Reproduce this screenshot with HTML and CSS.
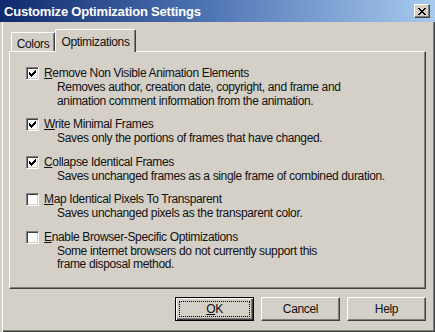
FILE: index.html
```html
<!DOCTYPE html>
<html>
<head>
<meta charset="utf-8">
<link rel="stylesheet" href="styles.css">
</head>
<body>
<div class="window">
  <div class="titlebar">
    <span class="title">Customize Optimization Settings</span>
    <span class="close"><svg width="8" height="7" viewBox="0 0 8 7" shape-rendering="crispEdges"><path d="M0 0h2v1h-2zM6 0h2v1h-2zM1 1h2v1h-2zM5 1h2v1h-2zM2 2h4v1h-4zM3 3h2v1h-2zM2 4h4v1h-4zM1 5h2v1h-2zM5 5h2v1h-2zM0 6h2v1h-2zM6 6h2v1h-2z" fill="#000"/></svg></span>
  </div>
  <div class="body">
    <div class="tabs">
      <div class="tab">Colors</div>
      <div class="tab active">Optimizations</div>
    </div>
    <div class="panel">
      <div class="option">
        <span class="check"><svg width="7" height="7" viewBox="0 0 7 7" shape-rendering="crispEdges"><path d="M6 0h1v3h-1zM5 1h1v3h-1zM4 2h1v3h-1zM0 2h1v3h-1zM1 3h1v3h-1zM2 4h1v3h-1zM3 3h1v3h-1z" fill="#000"/></svg></span>
        <div class="text">
          <div class="label"><u>R</u>emove Non Visible Animation Elements</div>
          <div class="desc">Removes author, creation date, copyright, and frame and<br>animation comment information from the animation.</div>
        </div>
      </div>
      <div class="option">
        <span class="check"><svg width="7" height="7" viewBox="0 0 7 7" shape-rendering="crispEdges"><path d="M6 0h1v3h-1zM5 1h1v3h-1zM4 2h1v3h-1zM0 2h1v3h-1zM1 3h1v3h-1zM2 4h1v3h-1zM3 3h1v3h-1z" fill="#000"/></svg></span>
        <div class="text">
          <div class="label"><u>W</u>rite Minimal Frames</div>
          <div class="desc">Saves only the portions of frames that have changed.</div>
        </div>
      </div>
      <div class="option">
        <span class="check"><svg width="7" height="7" viewBox="0 0 7 7" shape-rendering="crispEdges"><path d="M6 0h1v3h-1zM5 1h1v3h-1zM4 2h1v3h-1zM0 2h1v3h-1zM1 3h1v3h-1zM2 4h1v3h-1zM3 3h1v3h-1z" fill="#000"/></svg></span>
        <div class="text">
          <div class="label"><u>C</u>ollapse Identical Frames</div>
          <div class="desc">Saves unchanged frames as a single frame of combined duration.</div>
        </div>
      </div>
      <div class="option">
        <span class="check"></span>
        <div class="text">
          <div class="label"><u>M</u>ap Identical Pixels To Transparent</div>
          <div class="desc">Saves unchanged pixels as the transparent color.</div>
        </div>
      </div>
      <div class="option">
        <span class="check"></span>
        <div class="text">
          <div class="label"><u>E</u>nable Browser-Specific Optimizations</div>
          <div class="desc">Some internet browsers do not currently support this<br>frame disposal method.</div>
        </div>
      </div>
    </div>
    <div class="buttons">
      <button class="btn default"><span class="focus"><u>O</u>K</span></button>
      <button class="btn">Cancel</button>
      <button class="btn">Help</button>
    </div>
  </div>
</div>
</body>
</html>
```
FILE: styles.css
```css
html, body {
  margin: 0;
  padding: 0;
}
body {
  width: 435px;
  height: 332px;
  overflow: hidden;
  background: #d4d0c8;
  font-family: "Liberation Sans", Arial, sans-serif;
  font-size: 12px;
  letter-spacing: -0.35px;
  color: #111;
}
.window {
  width: 435px;
  height: 332px;
  display: flex;
  flex-direction: column;
}
.titlebar {
  height: 22px;
  flex: none;
  display: flex;
  align-items: center;
  justify-content: space-between;
  padding: 0 5px 0 4px;
  background: linear-gradient(to right, #0f2a6e, #4a70b0 45%, #a8caee);
}
.title {
  color: #fff;
  font-weight: bold;
  font-size: 13px;
  letter-spacing: -0.2px;
}
.close {
  width: 16px;
  height: 14px;
  box-sizing: border-box;
  background: #d4d0c8;
  border: 1px solid;
  border-color: #fff #404040 #404040 #fff;
  box-shadow: inset -1px -1px #808080;
  display: flex;
  align-items: center;
  justify-content: center;
}
.body {
  flex: 1;
  display: flex;
  flex-direction: column;
  padding: 7px 9px 11px 9px;
  box-shadow: inset 2px 0 #d4d0c8, inset 3px 0 #fff, inset -1px -1px #404040, inset -2px -2px #808080;
}
.tabs {
  height: 22px;
  display: flex;
  align-items: flex-end;
  padding-left: 2px;
}
.tab {
  box-sizing: border-box;
  height: 19px;
  width: 44px;
  padding-top: 4px;
  line-height: 14px;
  text-align: center;
  border-top: 1px solid #fff;
  border-left: 1px solid #fff;
  border-right: 1px solid #404040;
  border-radius: 2px 2px 0 0;
  box-shadow: inset -1px 0 #808080;
  background: #d4d0c8;
}
.tab.active {
  width: 81px;
  height: 23px;
  padding-top: 5px;
  margin-bottom: -1px;
  position: relative;
  z-index: 1;
}
.panel {
  height: 238px;
  box-sizing: border-box;
  border: 1px solid;
  border-color: #fff #404040 #404040 #fff;
  box-shadow: inset -1px -1px #808080;
  padding: 15px 10px 0 16px;
}
.option {
  display: flex;
  align-items: flex-start;
}
.option + .option {
  margin-top: 10px;
}
.check {
  flex: none;
  width: 13px;
  height: 13px;
  box-sizing: border-box;
  margin-right: 5px;
  background: #fff;
  border: 1px solid;
  border-color: #808080 #fff #fff #808080;
  box-shadow: inset 1px 1px #404040, inset -1px -1px #d4d0c8;
  display: flex;
  align-items: center;
  justify-content: center;
}
.label, .desc {
  line-height: 13.75px;
  white-space: nowrap;
}
.desc {
  padding-left: 13px;
}
.buttons {
  margin-top: 8px;
  display: flex;
  justify-content: flex-end;
  gap: 7px;
}
.btn {
  width: 79px;
  height: 24px;
  box-sizing: border-box;
  margin: 0;
  padding: 0;
  font: inherit;
  letter-spacing: inherit;
  color: #111;
  background: #d4d0c8;
  border: 1px solid;
  border-color: #fff #404040 #404040 #fff;
  box-shadow: inset -1px -1px #808080;
  display: flex;
  align-items: center;
  justify-content: center;
}
.btn.default {
  border: 1px solid #000;
  box-shadow: inset 1px 1px #fff, inset -1px -1px #404040, inset -2px -2px #808080;
  padding: 3px;
}
.focus {
  flex: 1;
  align-self: stretch;
  border: 1px dotted #000;
  display: flex;
  align-items: center;
  justify-content: center;
}
```
